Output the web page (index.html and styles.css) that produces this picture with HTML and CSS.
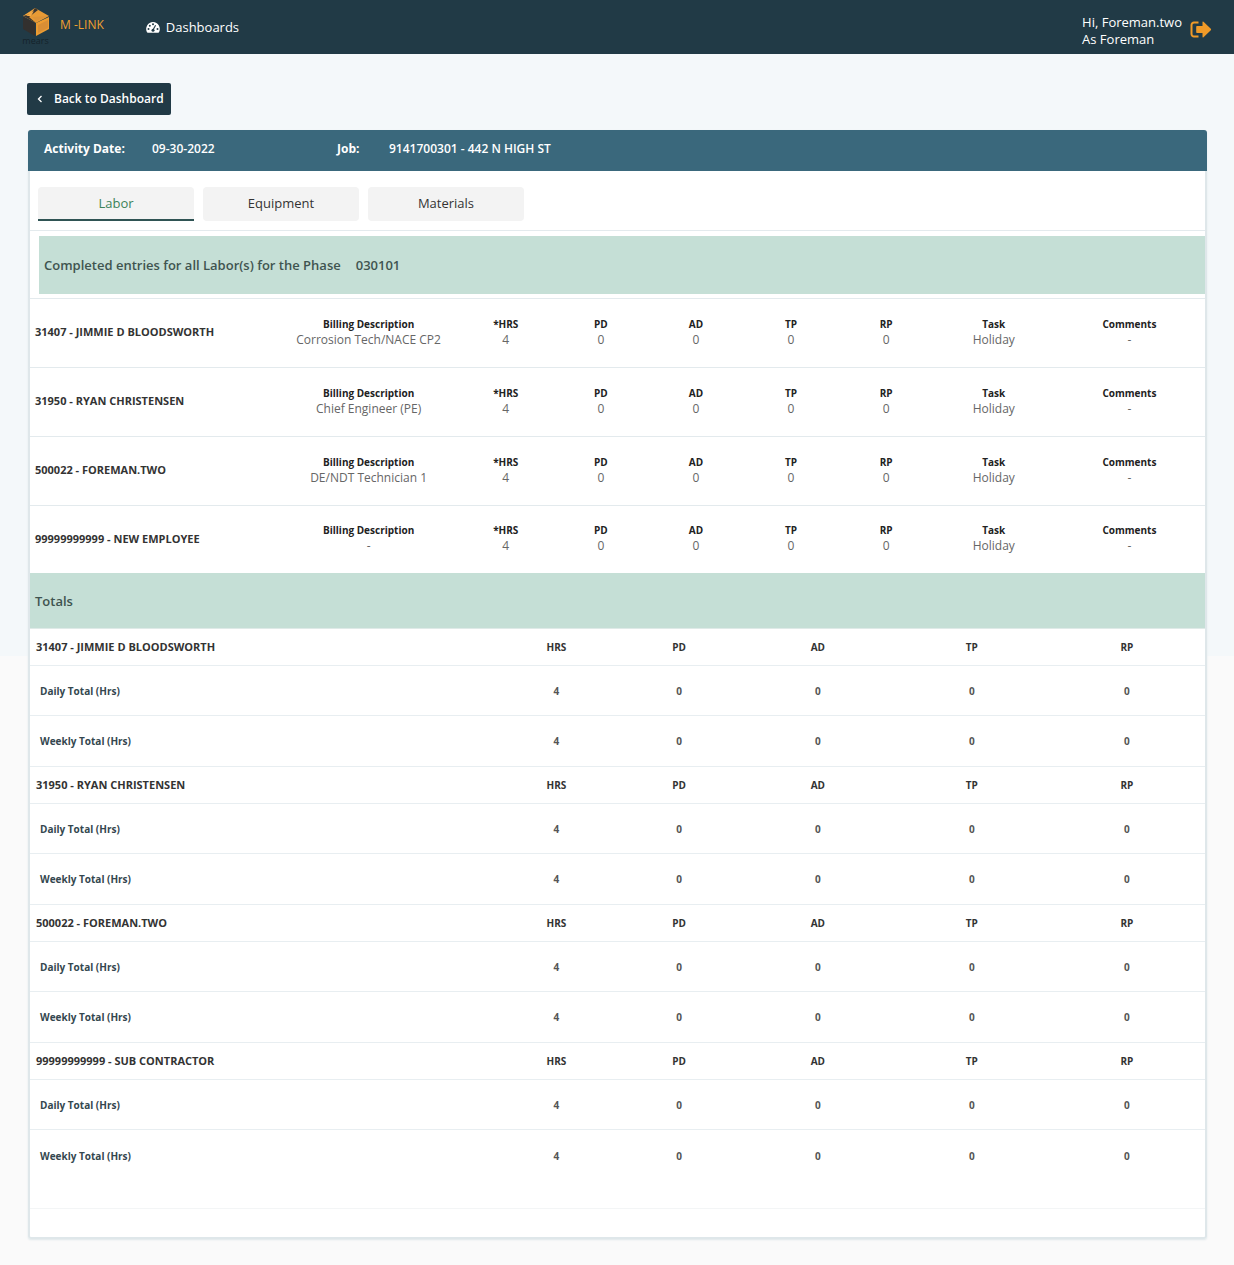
FILE: index.html
```html
<!DOCTYPE html>
<html lang="en">
<head>
<meta charset="utf-8">
<meta name="viewport" content="width=device-width, initial-scale=1">
<title>M-LINK</title>
<link rel="stylesheet" href="styles.css">
</head>
<body>
<header class="topbar">
  <a class="brand" href="#">
    <span class="logo">
      <svg width="26" height="28" viewBox="0 0 26 28" aria-hidden="true">
        <path d="M12 0 26 8 13 15 0 8z" fill="#e79a35"/>
        <path d="M0 8 12 1 9 7z" fill="#f3a842"/>
        <path d="M12 0 15 2 6 9 13 15 0 8 8 6z" fill="#3a3530"/>
        <path d="M3 8 11 3 8 8z" fill="#f3a842"/>
        <path d="M9 9 25 8 13 13z" fill="#dd9338"/>
        <path d="M0 9 12 15V28L0 21z" fill="#33302e"/>
        <path d="M13 15 26 9V21L13 28z" fill="#ec9c32"/>
        <path d="M15 17 25 12V20L15 25z" fill="#d88e35"/>
      </svg>
      <span class="logo-name">mears</span>
    </span>
    <span class="brand-name">M -LINK</span>
  </a>
  <nav class="nav">
    <a class="nav-link" href="#">
      <svg width="14" height="12" viewBox="0 0 14 12" aria-hidden="true">
        <path d="M7 1a7 7 0 0 0-6 10.300q.2.400.7.400h10.600q.5 0 .7-.400A7 7 0 0 0 7 1z" fill="#fff"/>
        <g fill="#213a46"><circle cx="2.500" cy="8" r="1"/><circle cx="3.800" cy="4.700" r="1"/><circle cx="7" cy="3.200" r="1"/><circle cx="11.500" cy="8" r="1"/><circle cx="7" cy="9.300" r="1.500"/></g>
        <path d="M7 9 9.600 4.200" stroke="#213a46" stroke-width="1.100"/>
      </svg>
      Dashboards
    </a>
  </nav>
  <div class="user">
    <p class="user-text">Hi, Foreman.two<br>As Foreman</p>
    <button class="logout" type="button" aria-label="Log out">
      <svg width="22" height="18" viewBox="0 0 22 18" aria-hidden="true">
        <path d="M8.500 1.500H4A2.500 2.500 0 0 0 1.500 4v9A2.500 2.500 0 0 0 4 15.500h4.500" fill="none" stroke="#f09a28" stroke-width="2"/>
        <path d="M7 5h5.500V1.200q0-1.200 1-.500l7.300 7.100q.7.700 0 1.400l-7.300 7.100q-1 .7-1-.500V12H7q-.8 0-.8-.8V5.800q0-.8.8-.8z" fill="#f09a28"/>
      </svg>
    </button>
  </div>
</header>

<main class="page">
  <button class="back" type="button">
    <svg width="6" height="8" viewBox="0 0 6 8" aria-hidden="true"><path d="M4.500 1 1.500 4l3 3" fill="none" stroke="#fff" stroke-width="1.300"/></svg>
    Back to Dashboard
  </button>

  <section class="card">
    <dl class="job">
      <dt>Activity Date:</dt><dd>09-30-2022</dd>
      <dt>Job:</dt><dd>9141700301 - 442 N HIGH ST</dd>
    </dl>
    <nav class="tabs">
      <button class="tab tab-active" type="button">Labor</button>
      <button class="tab" type="button">Equipment</button>
      <button class="tab" type="button">Materials</button>
    </nav>
    <div class="phase">
      <h2 class="band">Completed entries for all Labor(s) for the Phase <span>030101</span></h2>
    </div>

    <article class="entry">
      <h3 class="person">31407 - JIMMIE D BLOODSWORTH</h3>
      <dl class="facts">
        <div class="fact"><dt>Billing Description</dt><dd>Corrosion Tech/NACE CP2</dd></div>
        <div class="fact"><dt>*HRS</dt><dd>4</dd></div>
        <div class="fact"><dt>PD</dt><dd>0</dd></div>
        <div class="fact"><dt>AD</dt><dd>0</dd></div>
        <div class="fact"><dt>TP</dt><dd>0</dd></div>
        <div class="fact"><dt>RP</dt><dd>0</dd></div>
        <div class="fact"><dt>Task</dt><dd>Holiday</dd></div>
        <div class="fact"><dt>Comments</dt><dd>-</dd></div>
      </dl>
    </article>
    <article class="entry">
      <h3 class="person">31950 - RYAN CHRISTENSEN</h3>
      <dl class="facts">
        <div class="fact"><dt>Billing Description</dt><dd>Chief Engineer (PE)</dd></div>
        <div class="fact"><dt>*HRS</dt><dd>4</dd></div>
        <div class="fact"><dt>PD</dt><dd>0</dd></div>
        <div class="fact"><dt>AD</dt><dd>0</dd></div>
        <div class="fact"><dt>TP</dt><dd>0</dd></div>
        <div class="fact"><dt>RP</dt><dd>0</dd></div>
        <div class="fact"><dt>Task</dt><dd>Holiday</dd></div>
        <div class="fact"><dt>Comments</dt><dd>-</dd></div>
      </dl>
    </article>
    <article class="entry">
      <h3 class="person">500022 - FOREMAN.TWO</h3>
      <dl class="facts">
        <div class="fact"><dt>Billing Description</dt><dd>DE/NDT Technician 1</dd></div>
        <div class="fact"><dt>*HRS</dt><dd>4</dd></div>
        <div class="fact"><dt>PD</dt><dd>0</dd></div>
        <div class="fact"><dt>AD</dt><dd>0</dd></div>
        <div class="fact"><dt>TP</dt><dd>0</dd></div>
        <div class="fact"><dt>RP</dt><dd>0</dd></div>
        <div class="fact"><dt>Task</dt><dd>Holiday</dd></div>
        <div class="fact"><dt>Comments</dt><dd>-</dd></div>
      </dl>
    </article>
    <article class="entry entry-last">
      <h3 class="person">99999999999 - NEW EMPLOYEE</h3>
      <dl class="facts">
        <div class="fact"><dt>Billing Description</dt><dd>-</dd></div>
        <div class="fact"><dt>*HRS</dt><dd>4</dd></div>
        <div class="fact"><dt>PD</dt><dd>0</dd></div>
        <div class="fact"><dt>AD</dt><dd>0</dd></div>
        <div class="fact"><dt>TP</dt><dd>0</dd></div>
        <div class="fact"><dt>RP</dt><dd>0</dd></div>
        <div class="fact"><dt>Task</dt><dd>Holiday</dd></div>
        <div class="fact"><dt>Comments</dt><dd>-</dd></div>
      </dl>
    </article>

    <h2 class="band band-totals">Totals</h2>
    <table class="totals">
      <colgroup><col class="c-name"><col class="c-hrs"><col class="c-pd"><col class="c-ad"><col class="c-tp"><col class="c-rp"></colgroup>
      <tbody>
        <tr class="group"><th scope="rowgroup">31407 - JIMMIE D BLOODSWORTH</th><th>HRS</th><th>PD</th><th>AD</th><th>TP</th><th>RP</th></tr>
        <tr class="daily"><th scope="row">Daily Total (Hrs)</th><td>4</td><td>0</td><td>0</td><td>0</td><td>0</td></tr>
        <tr class="weekly"><th scope="row">Weekly Total (Hrs)</th><td>4</td><td>0</td><td>0</td><td>0</td><td>0</td></tr>
      </tbody>
      <tbody>
        <tr class="group"><th scope="rowgroup">31950 - RYAN CHRISTENSEN</th><th>HRS</th><th>PD</th><th>AD</th><th>TP</th><th>RP</th></tr>
        <tr class="daily"><th scope="row">Daily Total (Hrs)</th><td>4</td><td>0</td><td>0</td><td>0</td><td>0</td></tr>
        <tr class="weekly"><th scope="row">Weekly Total (Hrs)</th><td>4</td><td>0</td><td>0</td><td>0</td><td>0</td></tr>
      </tbody>
      <tbody>
        <tr class="group"><th scope="rowgroup">500022 - FOREMAN.TWO</th><th>HRS</th><th>PD</th><th>AD</th><th>TP</th><th>RP</th></tr>
        <tr class="daily"><th scope="row">Daily Total (Hrs)</th><td>4</td><td>0</td><td>0</td><td>0</td><td>0</td></tr>
        <tr class="weekly"><th scope="row">Weekly Total (Hrs)</th><td>4</td><td>0</td><td>0</td><td>0</td><td>0</td></tr>
      </tbody>
      <tbody>
        <tr class="group"><th scope="rowgroup">99999999999 - SUB CONTRACTOR</th><th>HRS</th><th>PD</th><th>AD</th><th>TP</th><th>RP</th></tr>
        <tr class="daily"><th scope="row">Daily Total (Hrs)</th><td>4</td><td>0</td><td>0</td><td>0</td><td>0</td></tr>
        <tr class="weekly"><th scope="row">Weekly Total (Hrs)</th><td>4</td><td>0</td><td>0</td><td>0</td><td>0</td></tr>
      </tbody>
    </table>
    <div class="card-foot"></div>
  </section>
</main>
</body>
</html>
```
FILE: styles.css
```css
* { box-sizing: border-box; }
body {
  margin: 0;
  font-family: "Open Sans", "Noto Sans", sans-serif;
  font-size: 12px;
  line-height: 16px;
  color: #333;
  background: #fafafa linear-gradient(#f4f8fa, #f4f8fa) no-repeat 0 0 / 100% 656px;
}
h2, h3, p, dl, dd { margin: 0; }
button { font: inherit; border: 0; cursor: pointer; }
a { color: inherit; text-decoration: none; }
svg { display: block; }

.topbar {
  display: flex;
  align-items: center;
  height: 54px;
  padding: 0 22px;
  background: #213a46;
  color: #fff;
}
.brand { display: flex; align-items: center; gap: 11px; color: #f0a030; }
.logo { display: flex; flex-direction: column; align-items: center; width: 27px; }
.logo-name { font-size: 9px; line-height: 10px; color: #15232b; }
.brand-name { font-size: 12px; padding-bottom: 4px; }
.nav { margin-left: 42px; }
.nav-link { display: flex; align-items: center; gap: 6px; font-size: 13px; }
.user { display: flex; align-items: center; gap: 8px; margin-left: auto; padding-top: 8px; }
.user-text { font-size: 13px; line-height: 17px; }
.logout { padding: 0 0 2px; background: none; }

.page { padding: 29px 27px 27px; }
.back {
  display: flex;
  align-items: center;
  gap: 11px;
  height: 32px;
  padding: 0 7px 0 10px;
  border-radius: 2px;
  background: #213a46;
  color: #fff;
  font-weight: 600;
}

.card {
  margin: 15px 0 0 1px;
  padding-bottom: 1px;
  border-radius: 3px;
  background: #fff;
  box-shadow: inset 0 0 0 2px #dfe7ea, 0 1px 2px #dfe7ea;
}
.job {
  display: grid;
  grid-template-columns: 108px 185px 52px 1fr;
  align-items: center;
  height: 41px;
  padding: 0 16px 3px;
  border-radius: 3px 3px 0 0;
  background: #3a687c;
  color: #fff;
  font-size: 12px;
  font-weight: 600;
}
.job dt { font-weight: 700; }
.tabs {
  display: flex;
  gap: 9px;
  margin: 0 2px;
  padding: 16px 8px 9px;
  border-bottom: 1px solid #e3eaed;
}
.tab {
  width: 156px;
  height: 34px;
  padding: 0;
  border-bottom: 2px solid #f3f3f3;
  border-radius: 4px;
  background: #f3f3f3;
  color: #333;
  font-size: 13px;
}
.tab-active { border-bottom-color: #2f5354; border-radius: 4px 4px 0 0; color: #3c8259; }

.phase { margin: 0 2px; padding: 5px 0 4px 9px; border-bottom: 1px solid #e3eaed; }
.band {
  display: flex;
  align-items: center;
  gap: 15px;
  height: 58px;
  padding: 0 5px;
  background: #c5dfd6;
  color: #3f5450;
  font-size: 13px;
  font-weight: 600;
}
.band-totals { height: 56px; margin: 0 2px; border-bottom: 1px solid #dfeae8; }

.entry {
  display: grid;
  grid-template-columns: 249fr 926fr;
  align-items: center;
  min-height: 69px;
  margin: 0 2px;
  padding-bottom: 2px;
  border-bottom: 1px solid #e3eaed;
}
.entry-last { min-height: 67px; border-bottom: 0; }
.person { padding-left: 5px; font-size: 11px; font-weight: 700; }
.facts {
  display: grid;
  grid-template-columns: 179fr repeat(5, 95fr) 120fr 151fr;
  padding-bottom: 1px;
  text-align: center;
}
.fact dt { font-size: 10px; font-weight: 700; color: #222; }
.fact dd { font-size: 12px; color: #666; }

.totals {
  width: calc(100% - 4px);
  margin: 0 2px;
  table-layout: fixed;
  border-collapse: separate;
  border-spacing: 0;
  font-size: 10px;
  text-align: center;
}
.c-name { width: 39.600%; }
.c-hrs { width: 10.400%; }
.c-pd { width: 10.500%; }
.c-ad, .c-tp { width: 13.100%; }
.c-rp { width: 13.300%; }
.totals th, .totals td { padding: 0; border-bottom: 1px solid #e8eef1; font-weight: 700; }
.totals td { color: #555; }
.totals tr > :first-child { text-align: left; }
.group { height: 37px; }
.group > :first-child { padding-left: 6px; font-size: 11px; }
.daily { height: 50px; }
.weekly { height: 51px; }
.daily > :first-child, .weekly > :first-child { padding-left: 10px; color: #34474f; }
.totals tbody:last-child tr:last-child > * { border-bottom: 0; }
.card-foot { height: 30px; margin: 27px 2px 0; border-top: 1px solid #f3f5f6; }
```
